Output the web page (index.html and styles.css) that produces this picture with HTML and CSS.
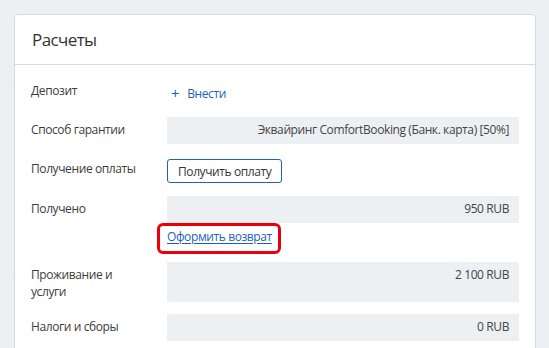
FILE: index.html
```html
<!DOCTYPE html>
<html lang="ru">
<head>
    <meta charset="UTF-8">
    <meta name="viewport" content="width=device-width, initial-scale=1.0">
    <title>Расчеты</title>
    <link rel="stylesheet" href="styles.css">
</head>
<body>
    <div class="payments-card">
        <div class="payments-heading">Расчеты</div>
        <div class="payments-body">
            <div class="pay-row pay-row-deposit">
                <div class="pay-label">Депозит</div>
                <div class="pay-value pay-value-plain">
                    <a class="add-link" href="#"><span class="add-plus">+</span>Внести</a>
                </div>
            </div>
            <div class="pay-row">
                <div class="pay-label">Способ гарантии</div>
                <div class="pay-value">Эквайринг ComfortBooking (Банк. карта) [50%]</div>
            </div>
            <div class="pay-row">
                <div class="pay-label">Получение оплаты</div>
                <div class="pay-value pay-value-button">
                    <button class="outline-btn" type="button">Получить оплату</button>
                </div>
            </div>
            <div class="pay-row pay-row-tight">
                <div class="pay-label">Получено</div>
                <div class="pay-value">950 RUB</div>
            </div>
            <div class="pay-row">
                <div class="pay-label"></div>
                <div class="pay-value pay-value-plain pay-value-refund">
                    <a class="refund-link" href="#">Оформить возврат</a>
                </div>
            </div>
            <div class="pay-row">
                <div class="pay-label">Проживание и<br>услуги</div>
                <div class="pay-value">2 100 RUB</div>
            </div>
            <div class="pay-row">
                <div class="pay-label">Налоги и сборы</div>
                <div class="pay-value">0 RUB</div>
            </div>
        </div>
    </div>
</body>
</html>
```

FILE: styles.css
```css
html, body {
    overflow: hidden;
}

body {
    margin: 0;
    padding: 14px 13px 0 14px;
    font-family: "Open Sans", "Noto Sans", sans-serif;
    font-size: 12px;
    letter-spacing: -0.4px;
    line-height: 17px;
    background-color: #edf0f3;
    color: #3c3c3c;
}

.payments-card {
    background-color: #fff;
    border: 1px solid #d3dae4;
    border-radius: 4px;
}

.payments-heading {
    height: 49px;
    display: flex;
    align-items: center;
    padding: 0 17px;
    font-size: 17px;
    letter-spacing: -0.6px;
    color: #333;
    border-bottom: 1px solid #d3dae4;
}

.payments-body {
    padding: 13px 16px 40px 16px;
}

.pay-row {
    display: flex;
    margin-bottom: 12px;
}

.pay-row-deposit {
    margin-bottom: 11px;
}

.pay-row-tight {
    margin-bottom: 0;
}

.pay-label {
    width: 136px;
    flex-shrink: 0;
    padding: 4px 0 2px 0;
}

.pay-value {
    flex: 1;
    min-height: 27px;
    box-sizing: border-box;
    padding: 4px 10px 3px 10px;
    background-color: #edf0f3;
    text-align: right;
    color: #444;
}

.pay-value-plain {
    background-color: transparent;
    text-align: left;
    padding: 7px 0 3px 0;
}

.pay-value-refund {
    padding: 5px 0 5px 0;
}

.pay-value-button {
    background-color: transparent;
    text-align: left;
    padding: 3px 0 1px 0;
}

.add-link {
    display: inline-flex;
    align-items: center;
    margin-left: 4px;
    color: #1d5fbd;
    text-decoration: none;
}

.add-plus {
    font-size: 15px;
    margin-right: 8px;
}

.outline-btn {
    height: 24px;
    padding: 0 10px;
    font-family: inherit;
    font-size: 12px;
    letter-spacing: -0.4px;
    color: #333;
    background-color: #fff;
    border: 1px solid #1f62b9;
    border-radius: 3px;
}

.refund-link {
    position: relative;
    color: #1d5fbd;
    text-decoration: underline;
    text-underline-offset: 2px;
}

/* red highlight around the link */
.refund-link::after {
    content: "";
    position: absolute;
    top: -5px;
    bottom: -9px;
    left: -10px;
    right: -9px;
    border: 3px solid #e8000b;
    border-radius: 6px;
}
```
